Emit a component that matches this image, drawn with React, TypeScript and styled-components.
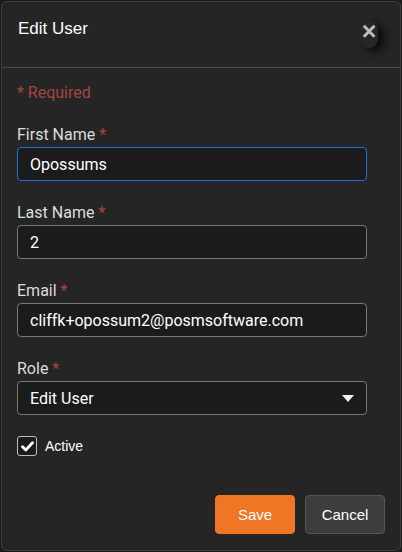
import React, { useState } from 'react';
import styled, { createGlobalStyle } from 'styled-components';

const GlobalStyle = createGlobalStyle`
    html, body {
        margin: 0;
        padding: 0;
        background: #1a1a1a;
    }
    * {
        box-sizing: border-box;
    }
`;

interface FieldProps {
    label: string;
    children: React.ReactNode;
}

const Field: React.FC<FieldProps> = ({label, children}) => (
    <FieldGroup>
        <Label>
            {label} <Star>*</Star>
        </Label>
        {children}
    </FieldGroup>
);

const EditUserModal: React.FC = () => {
    const [firstName, setFirstName] = useState('Opossums');
    const [lastName, setLastName] = useState('2');
    const [email, setEmail] = useState('cliffk+opossum2@posmsoftware.com');
    const [active, setActive] = useState(true);

    return (
        <Modal>
            <Header>
                <Title>Edit User</Title>
                <CloseButton aria-label="Close">×</CloseButton>
            </Header>
            <Body>
                <RequiredNote>* Required</RequiredNote>
                <Field label="First Name">
                    <Input
                        focused
                        value={firstName}
                        onChange={(e) => setFirstName(e.target.value)}
                    />
                </Field>
                <Field label="Last Name">
                    <Input value={lastName} onChange={(e) => setLastName(e.target.value)} />
                </Field>
                <Field label="Email">
                    <Input value={email} onChange={(e) => setEmail(e.target.value)} />
                </Field>
                <Field label="Role">
                    <Select>
                        <span>Edit User</span>
                        <Caret viewBox="0 0 12 7">
                            <path d="M0 0 L12 0 L6 7 Z" fill="#f2f2f2" />
                        </Caret>
                    </Select>
                </Field>
                <CheckRow onClick={() => setActive(!active)}>
                    <CheckBox>
                        {active && (
                            <svg width="13" height="11" viewBox="0 0 13 11">
                                <path
                                    d="M1.5 5.8 L4.8 9 L11.5 1.8"
                                    fill="none"
                                    stroke="#fff"
                                    strokeWidth="2.8"
                                    strokeLinecap="round"
                                    strokeLinejoin="round"
                                />
                            </svg>
                        )}
                    </CheckBox>
                    <CheckLabel>Active</CheckLabel>
                </CheckRow>
            </Body>
            <Footer>
                <Button variant="primary">Save</Button>
                <Button variant="secondary">Cancel</Button>
            </Footer>
        </Modal>
    );
};

export default function App() {
    return (
        <>
            <GlobalStyle />
            <EditUserModal />
        </>
    );
}

const Modal = styled.div`
    width: 400px;
    height: 550px;
    margin: 1px;
    display: flex;
    flex-direction: column;
    background-color: #252525;
    border: 1px solid #3c3c3c;
    border-radius: 5px;
    overflow: hidden;
`;

const Header = styled.div`
    height: 66px;
    display: flex;
    justify-content: space-between;
    align-items: flex-start;
    padding: 17px 16px 0 16px;
    border-bottom: 1px solid #4a4a4a;
`;

const Title = styled.h3`
    margin: 0;
    font-family: "Liberation Sans", Arial, sans-serif;
    font-size: 17px;
    font-weight: normal;
    color: #ffffff;
    line-height: 20px;
`;

const CloseButton = styled.button`
    width: 18px;
    height: 28px;
    margin-top: 1px;
    margin-right: 6px;
    padding: 0 0 6px 0;
    border: none;
    border-radius: 10px;
    background: #262626;
    color: #bdbdbd;
    font-family: "Liberation Sans", Arial, sans-serif;
    font-size: 25px;
    font-weight: bold;
    line-height: 20px;
    box-shadow: 6px 4px 8px rgba(0, 0, 0, 0.75);
    cursor: pointer;
`;

const Body = styled.div`
    flex: 1;
    display: flex;
    flex-direction: column;
    padding: 15px 16px 0 15px;
`;

const RequiredNote = styled.div`
    font-family: Roboto, sans-serif;
    font-size: 16px;
    color: #a8443f;
    line-height: 20px;
    margin-bottom: 20px;
`;

const FieldGroup = styled.div`
    display: flex;
    flex-direction: column;
    gap: 2px;
    margin-bottom: 20px;
`;

const Label = styled.label`
    padding-top: 2px;
    font-family: Roboto, sans-serif;
    font-size: 16px;
    color: #dcdcdc;
    line-height: 20px;
`;

const Star = styled.span`
    color: #a8443f;
`;

const Input = styled.input<{ focused?: boolean }>`
    width: 350px;
    height: 34px;
    padding: 0 12px;
    background-color: #1b1b1b;
    border: 1px solid ${(props) => (props.focused ? '#1d72e0' : '#767676')};
    border-radius: 4px;
    color: #ffffff;
    font-family: Roboto, sans-serif;
    font-size: 16px;
    outline: none;
`;

const Select = styled.div`
    width: 350px;
    height: 34px;
    padding: 0 12px;
    display: flex;
    align-items: center;
    justify-content: space-between;
    background-color: #1b1b1b;
    border: 1px solid #767676;
    border-radius: 4px;
    color: #ffffff;
    font-family: Roboto, sans-serif;
    font-size: 16px;
`;

const Caret = styled.svg`
    width: 12px;
    height: 7px;
`;

const CheckRow = styled.div`
    display: flex;
    align-items: center;
    gap: 8px;
    margin-top: 1px;
    cursor: pointer;
`;

const CheckBox = styled.div`
    width: 20px;
    height: 20px;
    display: flex;
    align-items: center;
    justify-content: center;
    border: 1px solid #bdbdbd;
    border-radius: 3px;
    background: #1b1b1b;
`;

const CheckLabel = styled.span`
    font-family: "Liberation Sans", Arial, sans-serif;
    font-size: 14px;
    color: #ffffff;
`;

const Footer = styled.div`
    display: flex;
    justify-content: flex-end;
    gap: 10px;
    padding: 0 15px 16px 0;
`;

const Button = styled.button<{ variant: 'primary' | 'secondary' }>`
    width: 80px;
    height: 39px;
    border-radius: 4px;
    font-family: "Liberation Sans", Arial, sans-serif;
    font-size: 15px;
    color: #ffffff;
    cursor: pointer;
    background-color: ${(props) => (props.variant === 'primary' ? '#ee7624' : '#3d3d3d')};
    border: 1px solid ${(props) => (props.variant === 'primary' ? '#ee7624' : '#555555')};
`;
